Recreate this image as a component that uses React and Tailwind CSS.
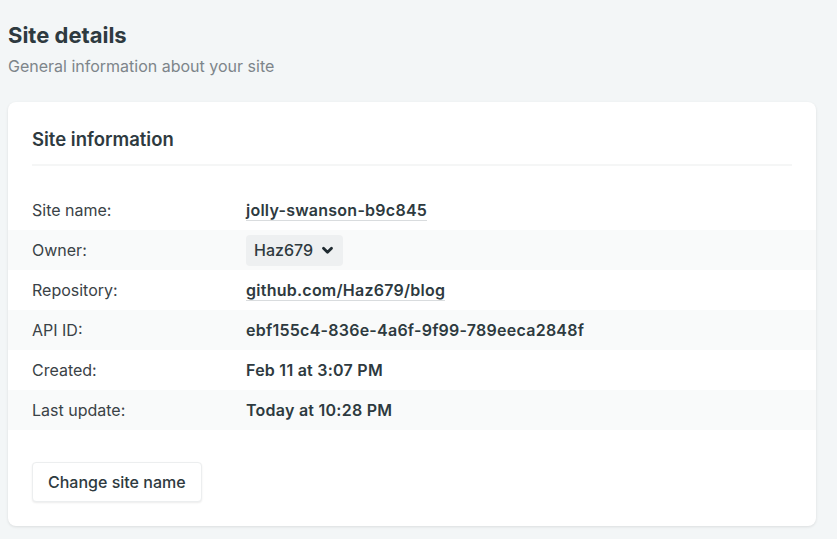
import React from "react";

const rows = [
  { label: "Site name:", value: "jolly-swanson-b9c845", link: true },
  { label: "Owner:", owner: true },
  { label: "Repository:", value: "github.com/Haz679/blog", link: true },
  { label: "API ID:", value: "ebf155c4-836e-4a6f-9f99-789eeca2848f" },
  { label: "Created:", value: "Feb 11 at 3:07 PM" },
  { label: "Last update:", value: "Today at 10:28 PM" },
];

export default function App() {
  return (
    <div
      className="w-[837px] h-[539px] overflow-hidden bg-[#f3f6f7] px-2 pt-[20px]"
      style={{ fontFamily: "Inter, 'Noto Sans', sans-serif" }}
    >
      <h1 className="text-[22px] leading-[30px] font-bold text-[#2e3a40] tracking-[0px]">
        Site details
      </h1>
      <p className="mt-[5px] text-[16px] leading-[22px] text-[#7d858a]">
        General information about your site
      </p>
      <div className="mt-[25px] w-[808px] rounded-lg bg-white shadow-[0_1px_3px_rgba(0,0,0,0.1)] pb-6">
        <div className="px-6 pt-[24px]">
          <h2 className="text-[18.5px] leading-[26px] font-semibold text-[#2e3a40] pb-[12px] border-b-2 border-[#f5f6f6]">
            Site information
          </h2>
        </div>
        <div className="mt-[24px]">
          {rows.map((r, i) => (
            <div
              key={r.label}
              className={`flex items-center h-[40px] px-6 text-[16px] ${i % 2 === 1 ? "bg-[#f9fafa]" : ""}`}
            >
              <div className="w-[214px] text-[#3a4246]">{r.label}</div>
              {r.owner ? (
                <div className="flex items-center gap-[8px] h-[31px] pl-[8px] pr-[9px] rounded bg-[#eef0f1] text-[#2e3a40] font-medium">
                  Haz679
                  <svg width="13" height="13" viewBox="0 0 12 12">
                    <path d="M2.3 4 L6 7.7 L9.7 4" fill="none" stroke="#1f2a30" strokeWidth="2.6" strokeLinecap="round" strokeLinejoin="round" />
                  </svg>
                </div>
              ) : (
                <div
                  className={`font-semibold text-[#2e3a40] tracking-[0.25px] ${r.link ? "border-b border-[#d9dcde] leading-[20px]" : ""}`}
                >
                  {r.value}
                </div>
              )}
            </div>
          ))}
        </div>
        <div className="px-6 mt-[32px]">
          <button className="h-[40px] px-[15px] rounded bg-white border border-[#eceeef] shadow-[0_1px_2px_rgba(0,0,0,0.08)] text-[16px] font-medium text-[#2e3a40]">
            Change site name
          </button>
        </div>
      </div>
    </div>
  );
}
